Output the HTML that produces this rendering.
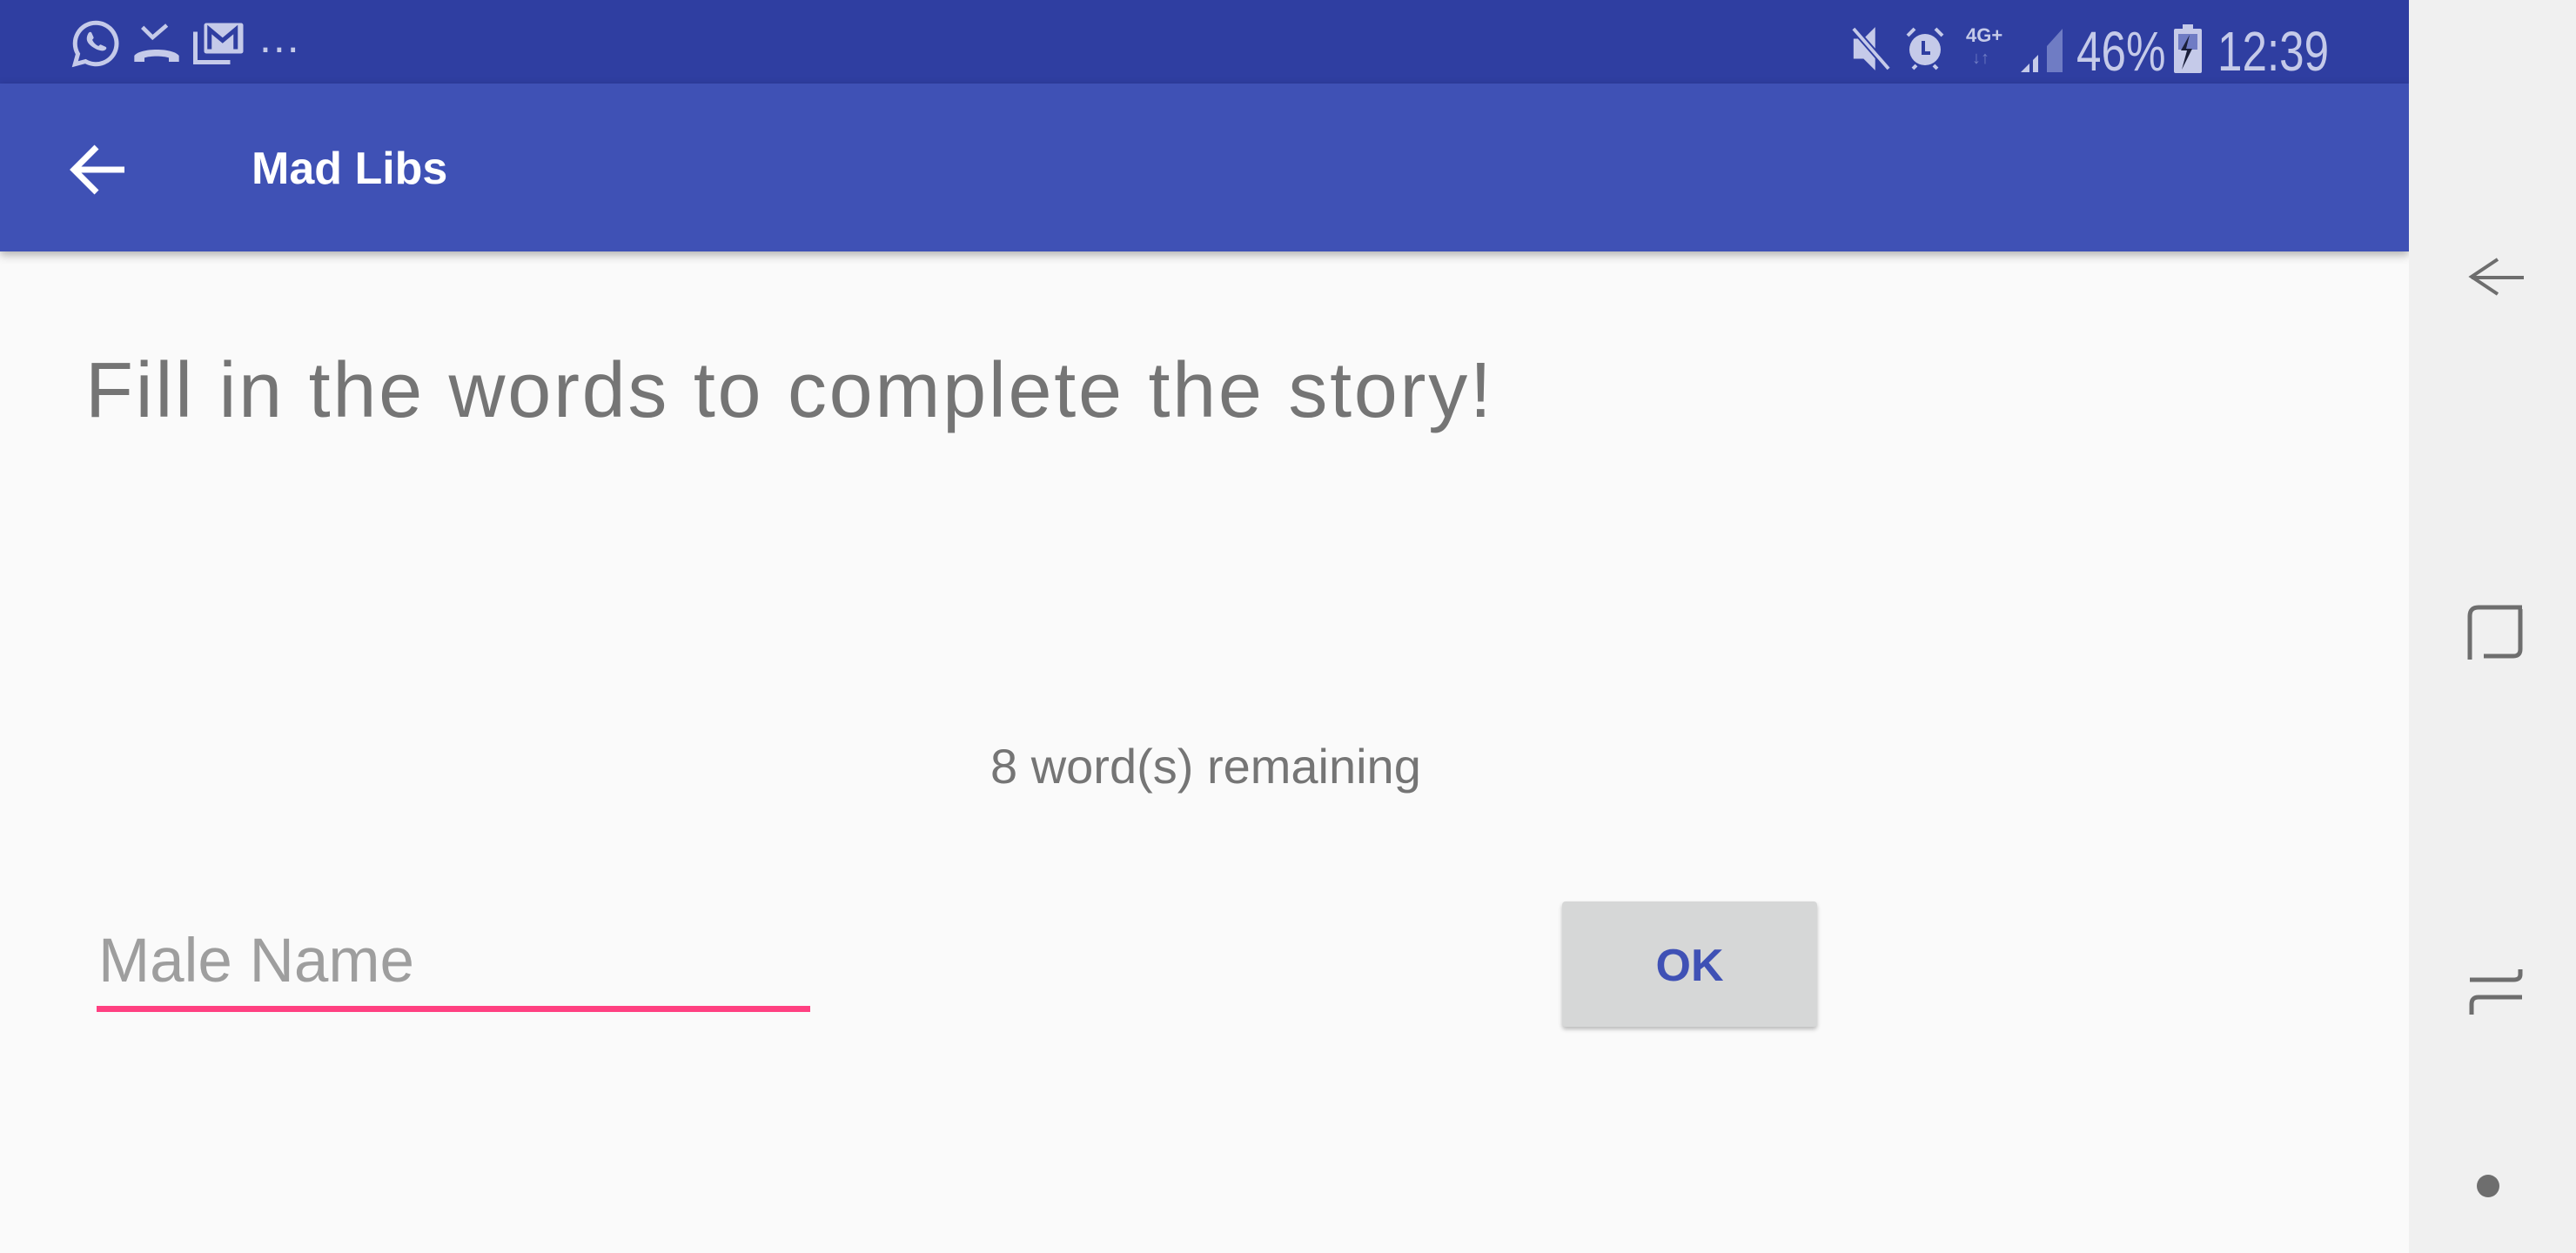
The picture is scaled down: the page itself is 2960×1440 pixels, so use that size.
<!DOCTYPE html>
<html><head><meta charset="utf-8"><style>
*{margin:0;padding:0;box-sizing:border-box}
body{width:2960px;height:1440px;overflow:hidden;background:#fafafa;font-family:"Liberation Sans",sans-serif;position:relative}
.status{position:absolute;left:0;top:0;width:2768px;height:96px;background:#2f3ea1}
.appbar{position:absolute;left:0;top:96px;width:2768px;height:193px;background:#3f51b5;box-shadow:0 4px 10px rgba(0,0,0,0.3)}
.nav{position:absolute;left:2768px;top:0;width:192px;height:1440px;background:#f0f0f0}
.t{position:absolute;white-space:nowrap}
</style></head><body>
<div class="status">
<svg style="position:absolute;left:80px;top:20px" width="60" height="60" viewBox="0 0 24 24"><path d="M12 2.5a9.5 9.5 0 0 0-8.2 14.3L2.5 21.5l4.8-1.3A9.5 9.5 0 1 0 12 2.5z" fill="none" stroke="#c5cae9" stroke-width="2"/><path d="M8.5 7.5c.5-1 1.3-1 1.6-.4l.9 2c.2.4-.3.9-.6 1.2.6 1.3 1.6 2.3 2.9 2.9.3-.3.8-.9 1.2-.6l2 .9c.6.3.6 1.1-.4 1.6-1.8.9-5.3-1-6.9-2.6S7.6 9.3 8.5 7.5z" fill="#c5cae9"/></svg>
<svg style="position:absolute;left:152px;top:26px" width="56" height="48" viewBox="0 0 24 20"><path d="M5 2l5 5 7-6" fill="none" stroke="#c5cae9" stroke-width="2"/><path d="M1 19v-3c3-4 19-4 22 0v3h-5v-2c-3-1-9-1-12 0v2z" fill="#c5cae9"/></svg>
<svg style="position:absolute;left:222px;top:24px" width="60" height="50" viewBox="0 0 24 20"><path d="M1 5v14h16" fill="none" stroke="#c5cae9" stroke-width="2"/><rect x="5" y="1" width="18" height="14" rx="1" fill="#c5cae9"/><path d="M7.5 13V4l6 5 6-5v9" fill="none" stroke="#2f3ea1" stroke-width="2"/></svg>
<div class="t" style="left:298px;top:14px;font-size:50px;color:#c5cae9;letter-spacing:2px">...</div>
<svg style="position:absolute;left:2126px;top:28px" width="46" height="56" viewBox="0 0 24 28"><path d="M2 8h6l7-7v26l-7-7H2z" fill="#c5cae9"/><path d="M2 2l21 24" stroke="#2f3ea1" stroke-width="4"/><path d="M2 2l21 24" stroke="#c5cae9" stroke-width="2"/></svg>
<svg style="position:absolute;left:2188px;top:27px" width="48" height="56" viewBox="0 0 24 28"><circle cx="12" cy="15" r="9" fill="#c5cae9"/><path d="M2 7l4-4M22 7l-4-4M5 26l2-2M19 26l-2-2" stroke="#c5cae9" stroke-width="2"/><path d="M11 10v7h4" fill="none" stroke="#2f3ea1" stroke-width="2"/></svg>
<div class="t" style="left:2259px;top:28px;font-size:22px;font-weight:bold;color:#c5cae9">4G+</div>
<div class="t" style="left:2266px;top:56px;font-size:20px;color:#6f7cc4">↓↑</div>
<svg style="position:absolute;left:2322px;top:29px" width="48" height="54" viewBox="0 0 48 54"><path d="M0 54L10 44V54z" fill="#c5cae9"/><path d="M14 40L20 34V54H14z" fill="#c5cae9"/><path d="M30 24L48 4V54H30z" fill="#6f7cc4"/></svg>
<div class="t" style="left:2386px;top:22px;font-size:64px;color:#c5cae9;transform:scaleX(0.8);transform-origin:0 0">46%</div>
<svg style="position:absolute;left:2498px;top:28px" width="32" height="56" viewBox="0 0 32 56"><rect x="10" y="0" width="12" height="5" fill="#c5cae9"/><rect x="0" y="5" width="32" height="51" rx="2" fill="#c5cae9"/><rect x="5" y="11" width="22" height="18" fill="#6f7cc4"/><path d="M18 12L8 30h7l-6 22 12-24h-7z" fill="#1a1f3a"/></svg>
<div class="t" style="left:2548px;top:22px;font-size:64px;color:#c5cae9;transform:scaleX(0.8);transform-origin:0 0">12:39</div>
</div>
<div class="appbar">
<svg style="position:absolute;left:79px;top:70px" width="66" height="58" viewBox="0 0 66 58"><path d="M64 29H6M32 3L6 29l26 26" fill="none" stroke="#fff" stroke-width="7"/></svg>
<div class="t" style="left:289px;top:68px;font-size:52px;font-weight:bold;color:#fff">Mad Libs</div>
</div>
<div class="t" style="left:98px;top:398px;font-size:90px;color:#757575;letter-spacing:2.7px">Fill in the words to complete the story!</div>
<div class="t" style="left:1138px;top:848px;font-size:56px;color:#757575">8 word(s) remaining</div>
<div class="t" style="left:113px;top:1064px;font-size:71px;color:#9e9e9e">Male Name</div>
<div style="position:absolute;left:111px;top:1156px;width:820px;height:7px;background:#ff4081"></div>
<div style="position:absolute;left:1795px;top:1036px;width:293px;height:144px;background:#d6d7d7;border-radius:4px;box-shadow:0 3px 5px rgba(0,0,0,0.25)"></div>
<div class="t" style="left:1795px;top:1080px;width:293px;text-align:center;font-size:52px;font-weight:bold;color:#3f51b5">OK</div>
<div class="nav">
<svg style="position:absolute;left:68px;top:280px" width="66" height="76" viewBox="0 0 66 76"><path d="M64 39H4M34 18L4 38l30 20" fill="none" stroke="#6e6e6e" stroke-width="4"/></svg>
<svg style="position:absolute;left:64px;top:690px" width="70" height="70" viewBox="0 0 70 70"><path d="M6 68V18Q6 8 16 8H66M22 64H56Q64 64 64 56V10" fill="none" stroke="#6e6e6e" stroke-width="5"/></svg>
<svg style="position:absolute;left:64px;top:1110px" width="70" height="60" viewBox="0 0 70 60"><path d="M64 4V10Q64 16 56 16H6M66 36H16Q8 36 8 44V56" fill="none" stroke="#6e6e6e" stroke-width="5"/></svg>
<div style="position:absolute;left:78px;top:1350px;width:26px;height:26px;border-radius:50%;background:#6e6e6e"></div>
</div>
</body></html>
